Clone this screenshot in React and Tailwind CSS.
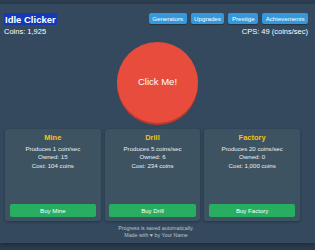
import React from 'react';

const generators = [
  { name: 'Mine', rate: '1 coin/sec', owned: 15, cost: '104' },
  { name: 'Drill', rate: '5 coins/sec', owned: 6, cost: '234' },
  { name: 'Factory', rate: '20 coins/sec', owned: 0, cost: '1,000' },
];

const tabs = ['Generators', 'Upgrades', 'Prestige', 'Achievements'];

export default function App() {
  return (
    <div className="h-[250px] w-[315px] bg-[#2c3e50] pt-[4px] text-[#ecf0f1]" style={{ fontFamily: '"Liberation Sans", Arial, sans-serif' }}>
      <div className="h-[239px] bg-[#34495e] pl-[4px] pr-[7px] shadow-[0_2px_6px_rgba(0,0,0,0.35)]">
        <div className="flex h-[20px] items-end justify-between">
          <h1 className="text-[9.5px] font-bold leading-[11px] text-white">
            <span className="bg-[#1438b8] px-[1px] py-[0.5px]">Idle Clicker</span>
          </h1>
          <div className="flex gap-[4px] pb-[0.5px]">
            {tabs.map((t) => (
              <button key={t} className="h-[11px] rounded-[2px] bg-[#3498db] px-[3.5px] text-[6.2px] leading-[11px] text-white shadow-[0_1px_1px_rgba(0,0,0,0.3)]">
                {t}
              </button>
            ))}
          </div>
        </div>
        <div className="mt-[3px] flex justify-between text-[7.5px] leading-[10px] text-white">
          <span>Coins: 1,925</span>
          <span>CPS: 49 (coins/sec)</span>
        </div>
        <div className="mt-[5px] flex justify-center">
          <button className="ml-[3px] flex h-[81px] w-[81px] items-center justify-center rounded-full bg-[#e74c3c] text-[9.5px] text-white shadow-[0_2px_0_#c0392b]">
            Click Me!
          </button>
        </div>
        <div className="mt-[6px] grid w-[296px] grid-cols-3 gap-[4px] pl-[1px]">
          {generators.map((g) => (
            <div key={g.name} className="flex h-[92px] flex-col rounded-[3px] bg-[#3d5361] px-[4.5px] pt-[3.5px] pb-[4.5px] text-center shadow-[0_1px_3px_rgba(0,0,0,0.3)]">
              <div className="text-[7.5px] font-bold leading-[9px] text-[#f1c40f]">{g.name}</div>
              <div className="mt-[3px] text-[6.1px] leading-[8.5px]">
                <p>Produces {g.rate}</p>
                <p>Owned: {g.owned}</p>
                <p>Cost: {g.cost} coins</p>
              </div>
              <button className="mt-auto h-[13px] rounded-[2px] bg-[#27ae60] text-[6.1px] leading-[13px] text-white">
                Buy {g.name}
              </button>
            </div>
          ))}
        </div>
        <div className="mt-[3.5px] text-center text-[5.3px] leading-[7px] text-[#bdc3c7]">
          <p>Progress is saved automatically.</p>
          <p>Made with ♥ by Your Name</p>
        </div>
      </div>
    </div>
  );
}
